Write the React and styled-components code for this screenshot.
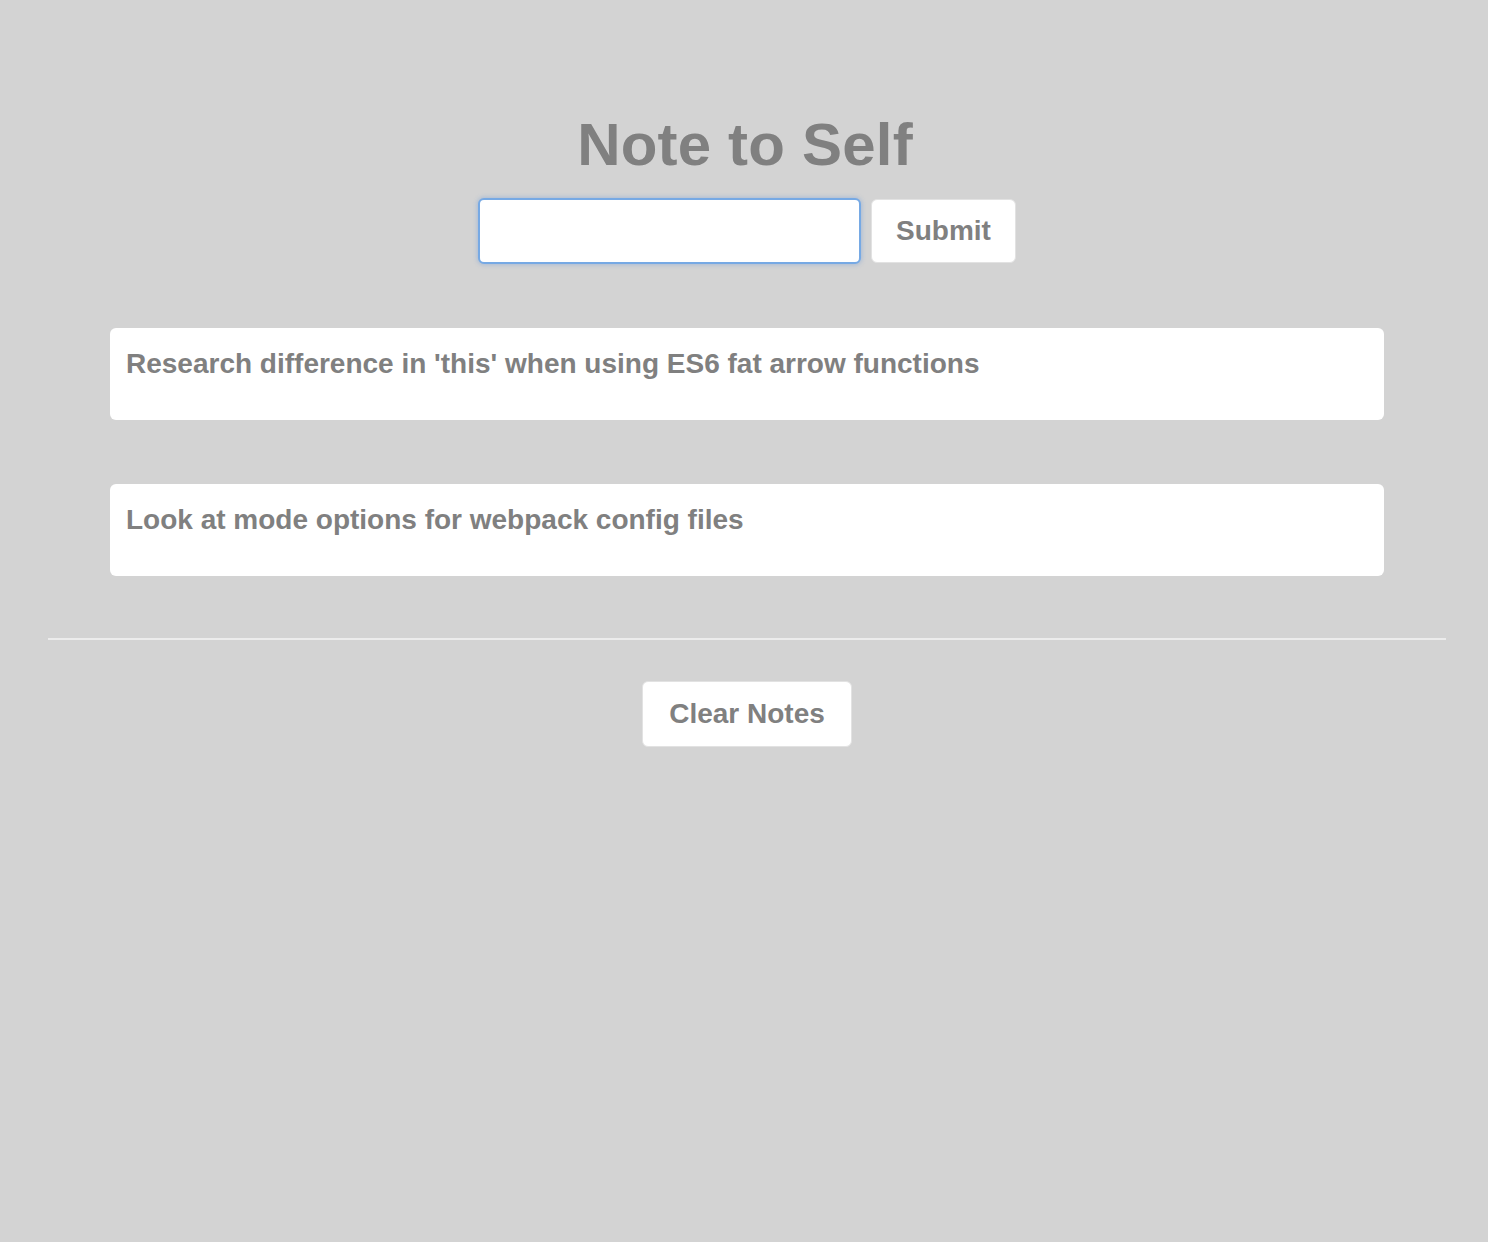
import React from "react";
import styled, { createGlobalStyle } from "styled-components";

const Global = createGlobalStyle`
  html, body { margin: 0; padding: 0; background: #d3d3d3; }
  body { font-family: "Liberation Sans", Arial, Helvetica, sans-serif; color: #808080; }
`;

const Page = styled.div`
  min-height: 1242px;
  background: #d3d3d3;
  padding-top: 108px;
  box-sizing: border-box;
`;

const Title = styled.h1`
  margin: 0;
  text-align: center;
  font-size: 60px;
  line-height: 74px;
  font-weight: 700;
  letter-spacing: 0.2px;
  color: #808080;
  padding-left: 2px;
`;

const Form = styled.form`
  display: flex;
  justify-content: center;
  align-items: center;
  gap: 10px;
  margin-top: 16px;
  padding-left: 6px;
`;

const Input = styled.input`
  flex: 0 0 383px;
  width: 383px;
  height: 66px;
  box-sizing: border-box;
  border: 2px solid #76a9e4;
  border-radius: 6px;
  background: #fff;
  box-shadow: 0 0 4px 1px rgba(120, 160, 215, 0.45);
  outline: none;
  font-size: 26px;
  font-family: inherit;
  padding: 0 12px;
`;

const Button = styled.button`
  height: ${(p) => p.$h || 64}px;
  padding: 0 ${(p) => p.$px || 24}px;
  background: #fff;
  border: 1px solid #e2e2e2;
  border-radius: 6px;
  font-family: "Liberation Sans", Arial, sans-serif;
  font-weight: 700;
  font-size: 28px;
  color: #808080;
  cursor: pointer;
  box-sizing: border-box;
`;

const Notes = styled.div`
  display: flex;
  flex-direction: column;
  gap: 64px;
  margin: 64px 104px 0 110px;
`;

const Note = styled.div`
  background: #fff;
  border-radius: 6px;
  height: 92px;
  box-sizing: border-box;
  padding: 19px 16px 17px;
`;

const NoteText = styled.h4`
  margin: 0;
  font-size: 28px;
  line-height: 34px;
  font-weight: 700;
  color: #808080;
`;

const Divider = styled.hr`
  border: none;
  height: 2px;
  background: #ececec;
  margin: 62px 42px 0 48px;
`;

const Footer = styled.div`
  display: flex;
  justify-content: center;
  margin-top: 41px;
  padding-left: 6px;
`;

const notes = [
  "Research difference in 'this' when using ES6 fat arrow functions",
  "Look at mode options for webpack config files",
];

export default function App() {
  return (
    <Page>
      <Global />
      <Title>Note to Self</Title>
      <Form onSubmit={(e) => e.preventDefault()}>
        <Input type="text" />
        <Button type="submit" $px={24}>Submit</Button>
      </Form>
      <Notes>
        {notes.map((n) => (
          <Note key={n}>
            <NoteText>{n}</NoteText>
          </Note>
        ))}
      </Notes>
      <Divider />
      <Footer>
        <Button $h={66} $px={26}>Clear Notes</Button>
      </Footer>
    </Page>
  );
}
